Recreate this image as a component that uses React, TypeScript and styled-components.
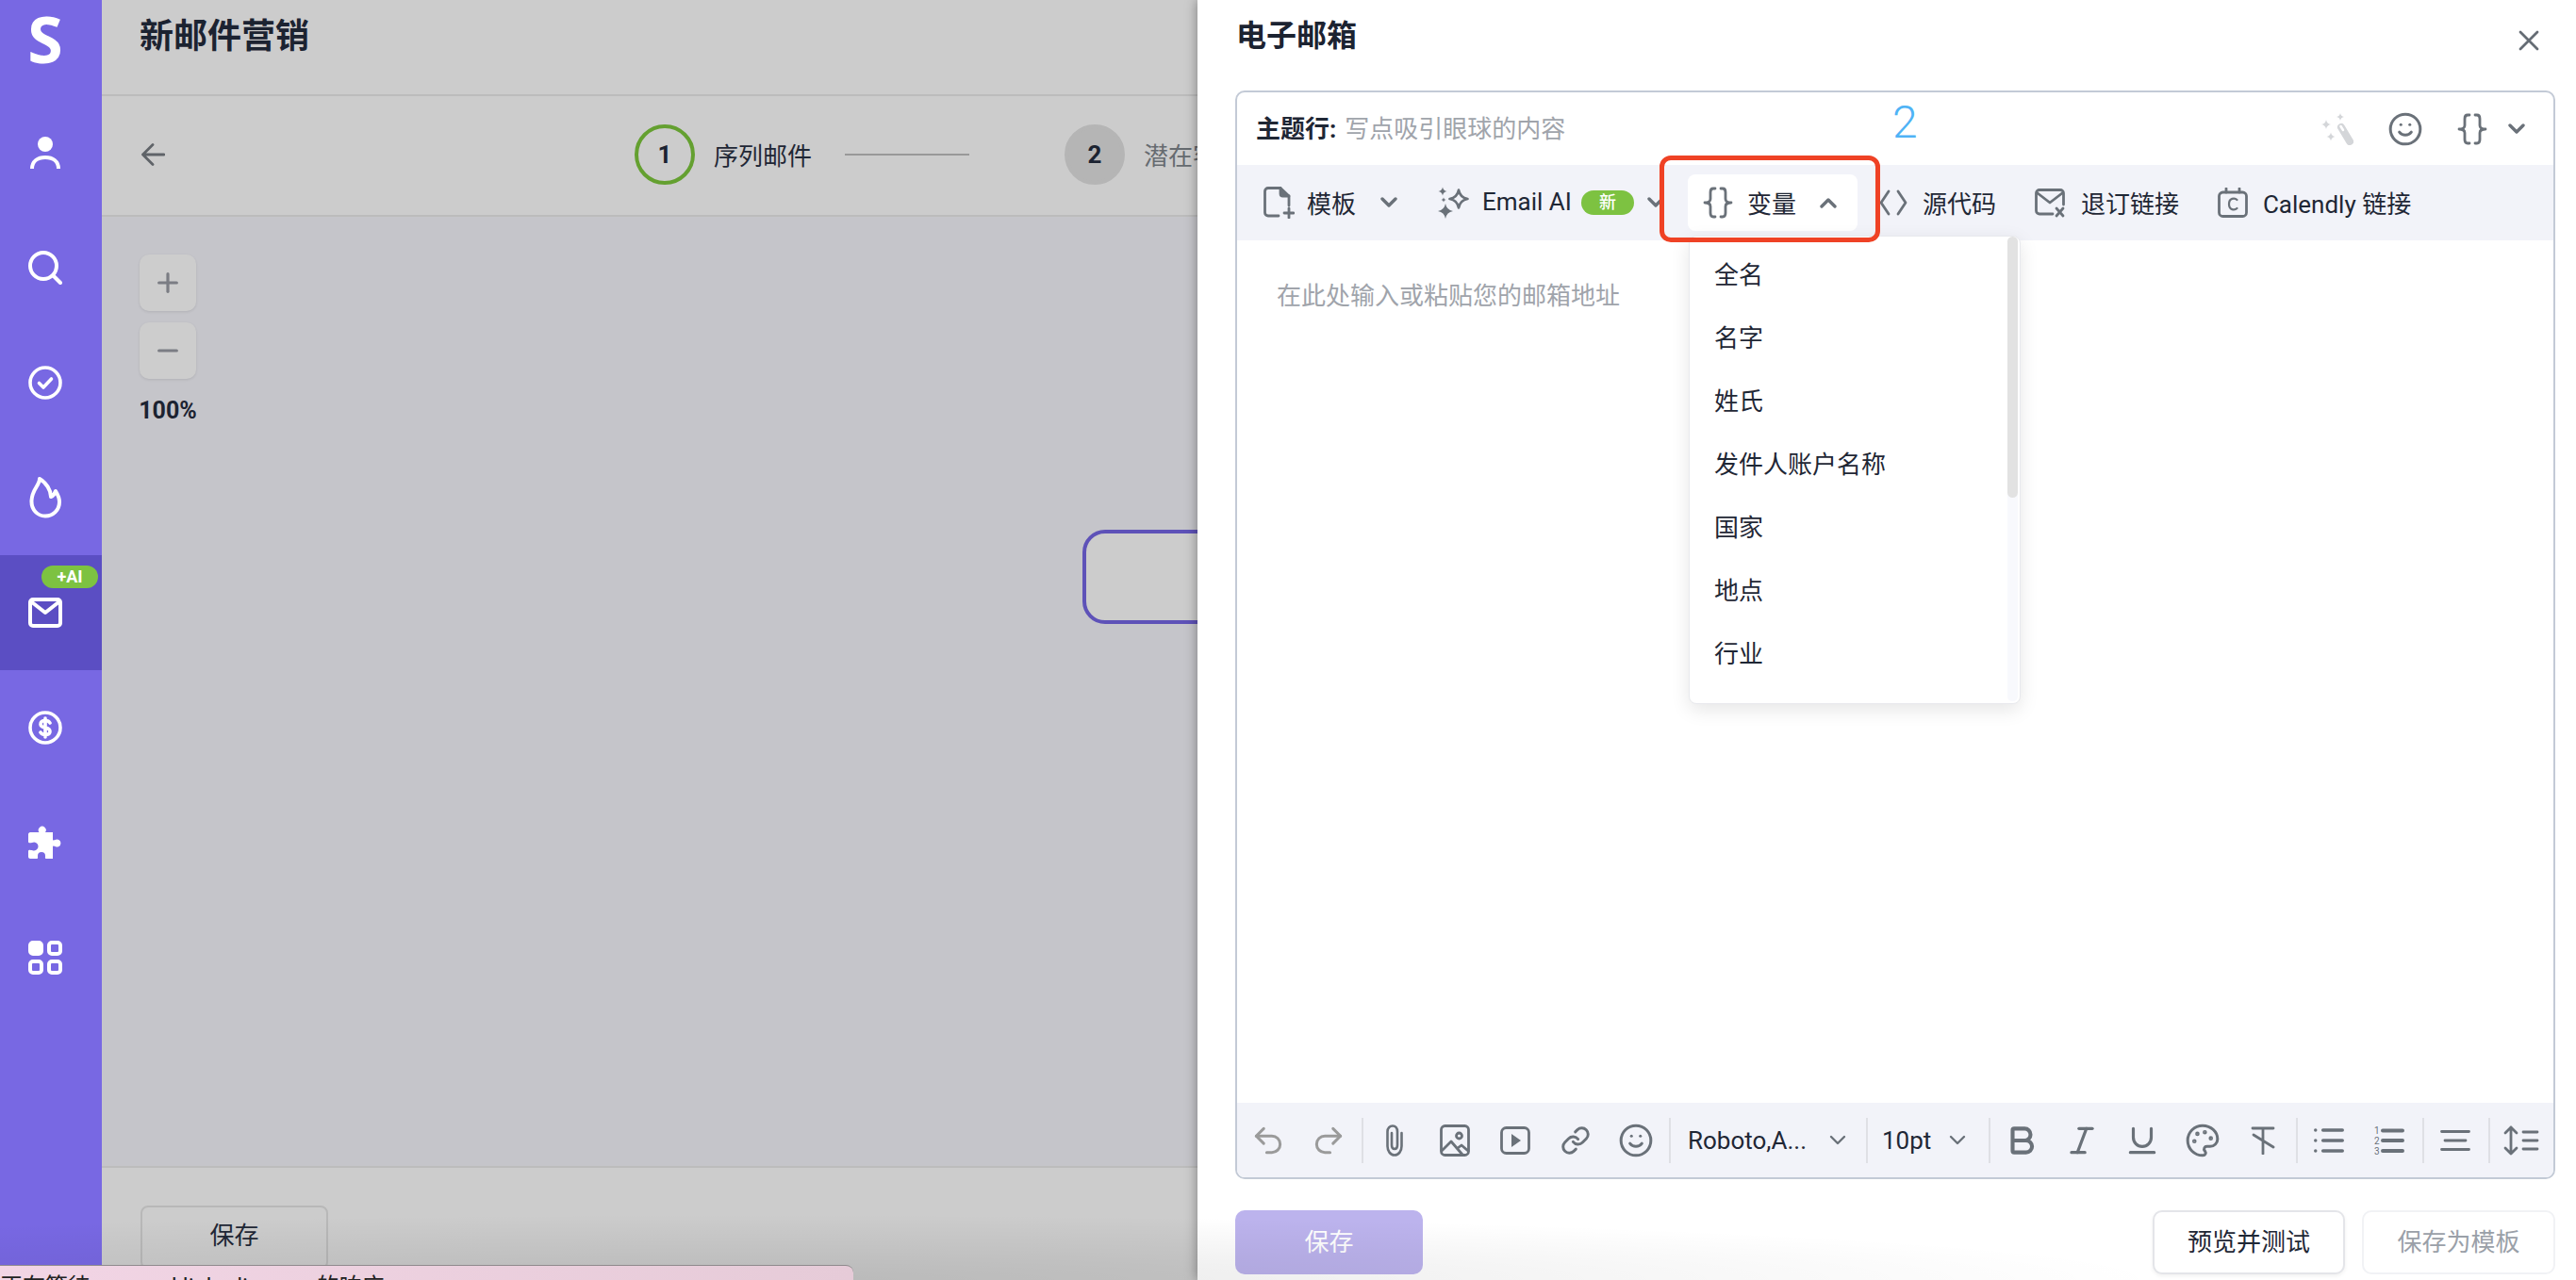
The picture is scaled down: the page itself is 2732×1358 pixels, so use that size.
import React from 'react'
import styled, { createGlobalStyle } from 'styled-components'
import { Bold, Italic, Link, List, Palette, Plus, Minus, Redo2, Smile, Underline, Undo2 } from 'lucide-react'

const GlobalStyle = createGlobalStyle`
  html, body {
    margin: 0;
    padding: 0;
    background: #fff;
  }
  body {
    font-family: Roboto, "Noto Sans CJK SC", sans-serif;
    color: #1f2735;
  }
  * {
    box-sizing: border-box;
  }
`

const Page = styled.div`
  position: relative;
  display: flex;
  width: 2732px;
  height: 1358px;
  overflow: hidden;
`

const Sidebar = styled.nav`
  flex: 0 0 108px;
  display: flex;
  flex-direction: column;
  background: #7868e3;
`

const Logo = styled.div`
  height: 101px;
  display: flex;
  justify-content: center;
  padding: 3px 12px 0 0;
  font-family: "Open Sans", sans-serif;
  font-size: 68px;
  line-height: 76px;
  font-weight: 700;
  color: #fff;
`

const NavItem = styled.div<{ $active?: boolean }>`
  position: relative;
  height: 122px;
  display: flex;
  align-items: center;
  justify-content: center;
  padding-right: 12px;
  background: ${(p) => (p.$active ? '#5b4ec3' : 'transparent')};
`

const AiBadge = styled.span`
  position: absolute;
  top: 11px;
  right: 4px;
  width: 60px;
  height: 24px;
  border-radius: 12px;
  background: #7dc241;
  color: #fff;
  font-size: 18px;
  line-height: 24px;
  font-weight: 700;
  text-align: center;
`

const Main = styled.main`
  flex: 1;
  display: flex;
  flex-direction: column;
  min-width: 0;
`

const Header = styled.header`
  height: 102px;
  flex: none;
  padding: 15px 0 0 40px;
  background: #cccccc;
  border-bottom: 2px solid #bcbcbc;
  font-size: 36px;
  line-height: 48px;
  font-weight: 600;
  color: #1c2331;
`

const Stepper = styled.div`
  height: 128px;
  flex: none;
  display: flex;
  align-items: center;
  padding: 0 0 2px 42px;
  background: #cccccc;
  border-bottom: 2px solid #bcbcbc;
`

const StepCircle = styled.div<{ $current?: boolean }>`
  width: 64px;
  height: 64px;
  border-radius: 50%;
  display: flex;
  align-items: center;
  justify-content: center;
  font-size: 26px;
  font-weight: 700;
  border: 4px solid ${(p) => (p.$current ? '#64a030' : '#b5b5b5')};
  background: ${(p) => (p.$current ? 'transparent' : '#b5b5b5')};
  color: #1c2331;
`

const BackArrow = styled.svg`
  width: 25px;
  height: 24px;
  margin-right: 498px;
  fill: none;
  stroke: #5f6368;
  stroke-width: 2.8;
  stroke-linecap: round;
  stroke-linejoin: round;
`

const StepLabel = styled.span<{ $muted?: boolean }>`
  margin: 0 0 2px 20px;
  font-size: 26px;
  white-space: nowrap;
  color: ${(p) => (p.$muted ? '#666b70' : '#1f2735')};
`

const StepLine = styled.div`
  width: 132px;
  height: 2px;
  margin: 0 101px 0 35px;
  background: #999;
`

const Canvas = styled.div`
  position: relative;
  flex: 1;
  padding: 40px 0 0 39px;
  background: #c5c5ca;
`

const ZoomControls = styled.div`
  width: 62px;
  display: flex;
  flex-direction: column;
  align-items: center;
  gap: 12px;
`

const ZoomButton = styled.div`
  width: 60px;
  height: 60px;
  display: flex;
  align-items: center;
  justify-content: center;
  border-radius: 10px;
  background: #cdcdcd;
  box-shadow: 0 1px 3px rgba(0, 0, 0, 0.1);
  color: #7b7d84;
`

const ZoomValue = styled.div`
  margin-top: 6px;
  font-size: 25px;
  line-height: 32px;
  font-weight: 700;
  color: #1c2331;
`

const FlowNode = styled.div`
  position: absolute;
  left: 1040px;
  top: 332px;
  width: 400px;
  height: 100px;
  border: 4px solid #5e52b8;
  border-radius: 24px;
  background: #cccccc;
`

const Footer = styled.footer`
  height: 121px;
  flex: none;
  padding: 40px 0 0 41px;
  background: #cccccc;
  border-top: 2px solid #bcbcbc;
`

const GhostButton = styled.div`
  width: 199px;
  height: 68px;
  border: 2px solid #b8b8b8;
  border-radius: 8px;
  text-align: center;
  font-size: 26px;
  line-height: 60px;
  color: #1f2735;
`

const StatusBar = styled.div`
  position: absolute;
  left: 0;
  bottom: 0;
  width: 905px;
  height: 16px;
  overflow: hidden;
  border-top: 1px solid #8f8a8d;
  border-top-right-radius: 8px;
  background: linear-gradient(90deg, #f2d5e5, #e6cbd8);
  font-size: 24px;
  line-height: 44px;
  color: #222;
  white-space: nowrap;
  z-index: 5;
`

const BottomShade = styled.div`
  position: absolute;
  left: 0;
  right: 0;
  bottom: 0;
  height: 80px;
  pointer-events: none;
  background: radial-gradient(ellipse 1500px 70px at 800px 100%, rgba(0, 0, 0, 0.09), rgba(0, 0, 0, 0));
  z-index: 4;
`

const Drawer = styled.aside`
  position: absolute;
  top: 0;
  right: 0;
  bottom: 0;
  width: 1462px;
  display: flex;
  flex-direction: column;
  padding: 0 22px 0 40px;
  background: #fff;
  box-shadow: 0 0 12px rgba(0, 0, 0, 0.4);
  z-index: 2;
`

const DrawerHead = styled.div`
  height: 96px;
  flex: none;
  display: flex;
  justify-content: space-between;
  padding: 16px 0 0 1px;
  font-size: 32px;
  line-height: 44px;
  font-weight: 600;
  color: #1c2331;
`

const CloseIcon = styled.svg`
  width: 22px;
  height: 22px;
  margin: 16px 17px 0 0;
  stroke: #656c74;
  stroke-width: 2.8;
  stroke-linecap: round;
`

const EditorBox = styled.section`
  height: 1155px;
  flex: none;
  display: flex;
  flex-direction: column;
  border: 2px solid #c3cad6;
  border-radius: 10px;
`

const SubjectRow = styled.div`
  height: 77px;
  flex: none;
  display: flex;
  align-items: center;
  padding: 0 30px 0 20px;
  font-size: 26px;
`

const SubjectText = styled.div`
  margin-bottom: 5px;
`

const SubjectLabel = styled.span`
  font-weight: 700;
  color: #1f2735;
`

const SubjectHint = styled.span`
  margin-left: 9px;
  color: #a0a4ab;
`

const SubjectTools = styled.div`
  margin-left: auto;
  display: flex;
  align-items: center;
  gap: 36px;
  color: #6a7179;
`

const BraceGroup = styled.div`
  display: flex;
  align-items: center;
  gap: 22px;
`

const Glyph = styled.svg<{ $w: number; $h: number; $color?: string }>`
  flex: none;
  width: ${(p) => p.$w}px;
  height: ${(p) => p.$h}px;
  color: ${(p) => p.$color || '#6a7179'};
`

const Toolbar = styled.div`
  height: 80px;
  flex: none;
  display: flex;
  align-items: center;
  background: #f2f3f9;
  font-size: 26px;
  color: #1f2735;
`

const ToolItem = styled.div<{ $offset: number; $gap: number }>`
  display: flex;
  align-items: center;
  flex: none;
  margin-left: ${(p) => p.$offset}px;
  gap: ${(p) => p.$gap}px;
  white-space: nowrap;
`

const ToolLabel = styled.span<{ $trail?: number }>`
  margin: 0 ${(p) => p.$trail || 0}px 2px 0;
`

const NewBadge = styled.span`
  width: 56px;
  height: 26px;
  margin-left: -4px;
  border-radius: 13px;
  background: #7dc241;
  color: #fff;
  font-size: 18px;
  line-height: 26px;
  font-weight: 500;
  text-align: center;
`

const VariableWrap = styled.div`
  position: relative;
  flex: none;
  margin-left: 25px;
`

const VariableButton = styled.div`
  width: 180px;
  height: 60px;
  display: flex;
  align-items: center;
  padding-left: 16px;
  gap: 15px;
  border-radius: 8px;
  background: #fff;
`

const Dropdown = styled.div`
  position: absolute;
  left: 1px;
  top: 65px;
  width: 352px;
  height: 497px;
  display: flex;
  padding: 8px 2px 2px 0;
  border: 1px solid #e8e9ed;
  border-radius: 8px;
  background: #fff;
  box-shadow: 0 6px 20px rgba(0, 0, 0, 0.1);
  z-index: 3;
`

const DropdownList = styled.ul`
  flex: 1;
  margin: 0;
  padding: 0;
  list-style: none;
`

const DropdownItem = styled.li`
  height: 67px;
  padding-left: 26px;
  font-size: 26px;
  line-height: 67px;
  color: #1f2735;
`

const ScrollTrack = styled.div`
  width: 11px;
  margin-top: -8px;
  border-radius: 6px;
  background: #f8f9fd;
`

const ScrollThumb = styled.div`
  height: 277px;
  border-radius: 6px;
  background: #e2e2e2;
`

const RedFrame = styled.div`
  position: absolute;
  left: 490px;
  top: 165px;
  width: 234px;
  height: 92px;
  border: 5px solid #ef4225;
  border-radius: 12px;
  z-index: 4;
`

const StepNumber = styled.div`
  position: absolute;
  left: 737px;
  top: 102px;
  font-size: 48px;
  line-height: 56px;
  font-weight: 300;
  color: #4fb3f6;
  z-index: 4;
`

const EditorBody = styled.div`
  flex: 1;
  padding: 39px 0 0 42px;
  font-size: 26px;
  line-height: 40px;
  color: #a0a4ab;
`

const FormatBar = styled.div`
  height: 79px;
  flex: none;
  display: flex;
  align-items: center;
  padding-left: 1px;
  background: #f2f3f9;
  border-radius: 0 0 8px 8px;
  font-size: 26px;
  color: #1f2735;
`

const IconSlot = styled.div<{ $muted?: boolean }>`
  width: 64px;
  flex: none;
  display: flex;
  align-items: center;
  justify-content: center;
  color: ${(p) => (p.$muted ? '#9a9a9a' : '#6a7179')};
`

const Divider = styled.div`
  width: 2px;
  height: 48px;
  flex: none;
  margin: 0 1px 0 3px;
  background: #dfe0e5;
`

const FormatSelect = styled.div<{ $width: number; $pad: number; $gap: number }>`
  width: ${(p) => p.$width}px;
  flex: none;
  display: flex;
  align-items: center;
  padding-left: ${(p) => p.$pad}px;
  gap: ${(p) => p.$gap}px;
`

const ActionRow = styled.div`
  flex: none;
  display: flex;
  align-items: center;
  margin-top: 33px;
`

const ActionButton = styled.div<{ $kind: 'primary' | 'outline' | 'disabled'; $width: number }>`
  width: ${(p) => p.$width}px;
  height: 68px;
  flex: none;
  border-radius: 10px;
  font-size: 26px;
  line-height: ${(p) => (p.$kind === 'primary' ? 68 : 64)}px;
  text-align: center;
  background: ${(p) => (p.$kind === 'primary' ? '#bcb3ed' : '#fff')};
  color: ${(p) => (p.$kind === 'primary' ? '#fff' : p.$kind === 'outline' ? '#1f2735' : '#9aa0a8')};
  border: ${(p) => (p.$kind === 'primary' ? 'none' : p.$kind === 'outline' ? '2px solid #e4e5e9' : '2px solid #f1f2f5')};
  box-shadow: ${(p) => (p.$kind === 'outline' ? '0 2px 4px rgba(0, 0, 0, 0.06)' : 'none')};
  margin-left: ${(p) => (p.$kind === 'outline' ? 'auto' : p.$kind === 'disabled' ? '18px' : '0')};
`

const ChevronDown = ({ w = 18, up = false, thick = 3.4 }: { w?: number; up?: boolean; thick?: number }) => (
  <Glyph $w={w} $h={12} viewBox="0 0 18 12" fill="none" stroke="currentColor" strokeWidth={thick} strokeLinecap="round" strokeLinejoin="round">
    <path d={up ? 'M2 10 L9 3 L16 10' : 'M2 2 L9 9 L16 2'} />
  </Glyph>
)

const Braces = () => (
  <Glyph $w={32} $h={34} viewBox="0 0 32 34" fill="none" stroke="currentColor" strokeWidth="2.8" strokeLinecap="round" strokeLinejoin="round">
    <path d="M13 2 H11 C8.5 2 8 4 8 6 V13 C8 15 6.5 17 2 17 C6.5 17 8 19 8 21 V28 C8 30 8.5 32 11 32 H13" />
    <path d="M19 2 H21 C23.5 2 24 4 24 6 V13 C24 15 25.5 17 30 17 C25.5 17 24 19 24 21 V28 C24 30 23.5 32 21 32 H19" />
  </Glyph>
)

const star = (x: number, y: number, r: number) =>
  `M${x} ${y - r} Q${x + r * 0.15} ${y - r * 0.15} ${x + r} ${y} Q${x + r * 0.15} ${y + r * 0.15} ${x} ${y + r} Q${x - r * 0.15} ${y + r * 0.15} ${x - r} ${y} Q${x - r * 0.15} ${y - r * 0.15} ${x} ${y - r}Z`

const SparkleIcon = () => (
  <Glyph $w={33} $h={34} viewBox="0 0 33 34">
    <path d={star(22, 13, 9.5)} fill="none" stroke="currentColor" strokeWidth="2.6" strokeLinejoin="round" />
    <path d={star(5, 5, 4.5)} fill="currentColor" />
    <path d={star(8, 26, 8)} fill="currentColor" />
    <path d={star(6, 14, 2.5)} fill="currentColor" />
  </Glyph>
)

const TemplateIcon = () => (
  <Glyph $w={33} $h={34} viewBox="0 0 33 34" fill="none" stroke="currentColor" strokeWidth="2.8" strokeLinecap="round" strokeLinejoin="round">
    <path d="M16 31 H5 C3 31 1.5 29.5 1.5 27.5 V5 C1.5 3 3 1.5 5 1.5 H18 L27 10 V20" />
    <path d="M18 1.5 V7.5 C18 9 19 10 20.5 10 H27" fill="currentColor" />
    <path d="M27 23 V33 M22 28 H32" />
  </Glyph>
)

const CodeIcon = () => (
  <Glyph $w={30} $h={28} viewBox="0 0 30 28" fill="none" stroke="currentColor" strokeWidth="2.8" strokeLinecap="round" strokeLinejoin="round">
    <path d="M10 2 L2 14 L10 26 M20 2 L28 14 L20 26" />
  </Glyph>
)

const MailXIcon = () => (
  <Glyph $w={32} $h={32} viewBox="0 0 32 32" fill="none" stroke="currentColor" strokeWidth="2.8" strokeLinecap="round" strokeLinejoin="round">
    <path d="M19 28 H5 C3 28 1.5 26.5 1.5 24.5 V6 C1.5 4 3 2.5 5 2.5 H27 C29 2.5 30.5 4 30.5 6 V18" />
    <path d="M3 6 L16 16 L29 6" />
    <path d="M23 22 L30 30 M30 22 L23 30" />
  </Glyph>
)

const CalendlyIcon = () => (
  <Glyph $w={32} $h={32} viewBox="0 0 32 32" fill="none" stroke="currentColor" strokeWidth="2.8" strokeLinecap="round" strokeLinejoin="round">
    <rect x="1.5" y="5" width="29" height="25.5" rx="4" />
    <path d="M9 1 V5 M23 1 V5" />
    <path d="M20.5 13 C18 10.5 12 11 12 17.5 C12 24 18 24.5 20.5 22" strokeWidth="2.2" />
  </Glyph>
)

const WandIcon = () => (
  <Glyph $w={34} $h={34} $color="#d4d6d9" viewBox="0 0 34 34">
    <path d={star(20, 4, 4)} fill="currentColor" />
    <path d={star(5, 12, 5)} fill="currentColor" />
    <path d={star(10, 25, 4.5)} fill="currentColor" />
    <path d="M21 15 L30 30" stroke="currentColor" strokeWidth="8" strokeLinecap="round" />
    <path d="M20.5 14 L23 18" stroke="#fff" strokeWidth="2.5" strokeLinecap="round" />
  </Glyph>
)

const ClipIcon = () => (
  <Glyph $w={20} $h={34} viewBox="0 0 20 34" fill="none" stroke="currentColor" strokeWidth="2.6" strokeLinecap="round" strokeLinejoin="round">
    <path d="M17.5 9 V23 C17.5 28 14.5 32.5 10 32.5 C5.5 32.5 2.5 28 2.5 23 V7.5 C2.5 4 5 1.5 8 1.5 C11 1.5 13 4 13 7.5 V22 C13 24.5 12 26 10 26 C8 26 7 24.5 7 22 V9" />
  </Glyph>
)

const ImageIcon = () => (
  <Glyph $w={32} $h={34} viewBox="0 0 32 34" fill="none" stroke="currentColor" strokeWidth="2.8" strokeLinecap="round" strokeLinejoin="round">
    <rect x="1.5" y="1.5" width="29" height="31" rx="4" />
    <circle cx="20.5" cy="12" r="3" />
    <path d="M2 28 L12 18 L24 32 M19 25 L23 22 L30 28" />
  </Glyph>
)

const VideoIcon = () => (
  <Glyph $w={32} $h={30} viewBox="0 0 32 30">
    <rect x="1.5" y="1.5" width="29" height="27" rx="5" fill="none" stroke="currentColor" strokeWidth="2.8" />
    <path d="M12 8 L22 15 L12 22Z" fill="currentColor" />
  </Glyph>
)

const ClearFormatIcon = () => (
  <Glyph $w={26} $h={30} viewBox="0 0 26 30" fill="none" stroke="currentColor" strokeWidth="2.8" strokeLinecap="round">
    <path d="M2 2 H24 M13 2 V29 M3 9 L24 22" />
  </Glyph>
)

const OrderedIcon = () => (
  <Glyph $w={32} $h={34} viewBox="0 0 32 34">
    <g fill="currentColor" fontSize="10" fontFamily="Roboto, sans-serif">
      <text x="0" y="10">1</text>
      <text x="0" y="21">2</text>
      <text x="0" y="32">3</text>
    </g>
    <path d="M9 6.5 H30 M9 17 H30 M9 28 H30" stroke="currentColor" strokeWidth="4" strokeLinecap="round" />
  </Glyph>
)

const AlignIcon = () => (
  <Glyph $w={32} $h={24} viewBox="0 0 32 24" fill="none" stroke="currentColor" strokeWidth="2.8" strokeLinecap="round">
    <path d="M1.5 2.5 H30.5 M5 12 H27 M1.5 21.5 H30.5" />
  </Glyph>
)

const LineHeightIcon = () => (
  <Glyph $w={38} $h={32} viewBox="0 0 38 32" fill="none" stroke="currentColor" strokeWidth="2.8" strokeLinecap="round" strokeLinejoin="round">
    <path d="M8 2 V30 M2 8 L8 2 L14 8 M2 24 L8 30 L14 24" />
    <path d="M21 7 H36 M21 16 H36 M21 25 H36" />
  </Glyph>
)

const FlameIcon = () => (
  <Glyph $w={34} $h={44} $color="#fff" viewBox="0 0 34 44" fill="none" stroke="currentColor" strokeWidth="4" strokeLinejoin="round">
    <path d="M11 2 C11 9 3 13 2.5 25 C2 35 9 41.5 17 41.5 C25 41.5 32 35.5 32 26.5 C32 22 30.5 19 28 15 C27 18 26 20 23 21 C23 14 18 6 11 2Z" />
  </Glyph>
)

const navIcons = [
  <Glyph key="user" $w={32} $h={34} $color="#fff" viewBox="0 0 32 34">
    <circle cx="16" cy="8" r="8" fill="currentColor" />
    <path d="M2 34 C2 26 8 22 16 22 C24 22 30 26 30 34" fill="none" stroke="currentColor" strokeWidth="4" />
  </Glyph>,
  <Glyph key="search" $w={36} $h={36} $color="#fff" viewBox="0 0 36 36" fill="none" stroke="currentColor" strokeWidth="4" strokeLinecap="round">
    <circle cx="16" cy="16" r="14" />
    <path d="M27 27 L34 34" />
  </Glyph>,
  <Glyph key="check" $w={36} $h={36} $color="#fff" viewBox="0 0 36 36" fill="none" stroke="currentColor" strokeWidth="3.6" strokeLinecap="round" strokeLinejoin="round">
    <circle cx="18" cy="18" r="16" />
    <path d="M11.5 18.5 L16 23 L24.5 14" />
  </Glyph>,
  <FlameIcon key="flame" />,
  <Glyph key="mail" $w={36} $h={32} $color="#fff" viewBox="0 0 36 32" fill="none" stroke="currentColor" strokeWidth="4" strokeLinecap="round" strokeLinejoin="round">
    <rect x="2" y="2" width="32" height="28" rx="3" />
    <path d="M4 5 L18 16 L32 5" />
  </Glyph>,
  <Glyph key="dollar" $w={36} $h={36} $color="#fff" viewBox="0 0 36 36" fill="none" stroke="currentColor" strokeWidth="3.6" strokeLinecap="round" strokeLinejoin="round">
    <circle cx="18" cy="18" r="16" />
    <path d="M23 13 C22 11 20 10.5 18 10.5 C15 10.5 13 12 13 14.5 C13 17 15.5 17.5 18 18 C20.5 18.5 23 19.5 23 22 C23 24.5 21 25.5 18 25.5 C15.5 25.5 14 24.5 13 23 M18 8 V28" />
  </Glyph>,
  <Glyph key="puzzle" $w={36} $h={36} $color="#fff" viewBox="0 0 36 36">
    <path
      fill="currentColor"
      d="M9 7 H11.5 A4 4 0 1 1 18 7 H26 V14.5 C26 16 27.5 15.5 28.5 15 A4 4 0 1 1 28.5 22 C27.5 21.5 26 21 26 22.5 V35 H19 C17.5 35 18 33 18 32 A4 4 0 1 0 10 32 C10 33 10.5 35 9 35 H2 C1 35 0 34 0 33 V27 C0 25 3 26 4 26 A4.5 4.5 0 1 0 4 18 C3 18 0 19 0 17 V9 C0 8 1 7 2 7Z"
    />
  </Glyph>,
  <Glyph key="apps" $w={36} $h={36} $color="#fff" viewBox="0 0 36 36" fill="none" stroke="currentColor" strokeWidth="4">
    <rect x="2" y="2" width="12" height="12" rx="3" fill="currentColor" />
    <rect x="22" y="2" width="12" height="12" rx="3" />
    <rect x="2" y="22" width="12" height="12" rx="3" />
    <rect x="22" y="22" width="12" height="12" rx="3" />
  </Glyph>,
]

const variables = ['全名', '名字', '姓氏', '发件人账户名称', '国家', '地点', '行业']

const App: React.FC = () => {
  return (
    <Page>
      <GlobalStyle />
      <Sidebar>
        <Logo>S</Logo>
        {navIcons.map((icon, i) => (
          <NavItem key={i} $active={i === 4}>
            {i === 4 && <AiBadge>+AI</AiBadge>}
            {icon}
          </NavItem>
        ))}
      </Sidebar>

      <Main>
        <Header>新邮件营销</Header>
        <Stepper>
          <BackArrow viewBox="0 0 25 24">
            <path d="M12 1.5 L1.5 12 L12 22.5 M1.5 12 H24" />
          </BackArrow>
          <StepCircle $current>1</StepCircle>
          <StepLabel>序列邮件</StepLabel>
          <StepLine />
          <StepCircle>2</StepCircle>
          <StepLabel $muted>潜在客户</StepLabel>
        </Stepper>
        <Canvas>
          <ZoomControls>
            <ZoomButton>
              <Plus size={32} strokeWidth={2.4} />
            </ZoomButton>
            <ZoomButton>
              <Minus size={32} strokeWidth={2.4} />
            </ZoomButton>
            <ZoomValue>100%</ZoomValue>
          </ZoomControls>
          <FlowNode />
        </Canvas>
        <Footer>
          <GhostButton>保存</GhostButton>
        </Footer>
      </Main>

      <Drawer>
        <DrawerHead>
          电子邮箱
          <CloseIcon viewBox="0 0 22 22">
            <path d="M2 2 L20 20 M20 2 L2 20" />
          </CloseIcon>
        </DrawerHead>
        <EditorBox>
          <SubjectRow>
            <SubjectText>
              <SubjectLabel>主题行:</SubjectLabel>
              <SubjectHint>写点吸引眼球的内容</SubjectHint>
            </SubjectText>
            <SubjectTools>
              <WandIcon />
              <Smile size={38} strokeWidth={1.9} />
              <BraceGroup>
                <Braces />
                <ChevronDown />
              </BraceGroup>
            </SubjectTools>
          </SubjectRow>
          <Toolbar>
            <ToolItem $offset={28} $gap={13}>
              <TemplateIcon />
              <ToolLabel $trail={13}>模板</ToolLabel>
              <ChevronDown />
            </ToolItem>
            <ToolItem $offset={43} $gap={14}>
              <SparkleIcon />
              <ToolLabel>Email AI</ToolLabel>
              <NewBadge>新</NewBadge>
              <ChevronDown />
            </ToolItem>
            <VariableWrap>
              <VariableButton>
                <Braces />
                <ToolLabel $trail={10}>变量</ToolLabel>
                <ChevronDown up />
              </VariableButton>
              <Dropdown>
                <DropdownList>
                  {variables.map((v) => (
                    <DropdownItem key={v}>{v}</DropdownItem>
                  ))}
                </DropdownList>
                <ScrollTrack>
                  <ScrollThumb />
                </ScrollTrack>
              </Dropdown>
            </VariableWrap>
            <ToolItem $offset={23} $gap={16}>
              <CodeIcon />
              <ToolLabel>源代码</ToolLabel>
            </ToolItem>
            <ToolItem $offset={41} $gap={17}>
              <MailXIcon />
              <ToolLabel>退订链接</ToolLabel>
            </ToolItem>
            <ToolItem $offset={41} $gap={16}>
              <CalendlyIcon />
              <ToolLabel>Calendly 链接</ToolLabel>
            </ToolItem>
          </Toolbar>
          <EditorBody>在此处输入或粘贴您的邮箱地址</EditorBody>
          <FormatBar>
            <IconSlot $muted>
              <Undo2 size={38} strokeWidth={1.9} />
            </IconSlot>
            <IconSlot $muted>
              <Redo2 size={38} strokeWidth={1.9} />
            </IconSlot>
            <Divider />
            <IconSlot>
              <ClipIcon />
            </IconSlot>
            <IconSlot>
              <ImageIcon />
            </IconSlot>
            <IconSlot>
              <VideoIcon />
            </IconSlot>
            <IconSlot>
              <Link size={32} strokeWidth={2.2} />
            </IconSlot>
            <IconSlot>
              <Smile size={38} strokeWidth={1.9} />
            </IconSlot>
            <Divider />
            <FormatSelect $width={203} $pad={17} $gap={21}>
              Roboto,A...
              <ChevronDown w={24} thick={2.4} />
            </FormatSelect>
            <Divider />
            <FormatSelect $width={124} $pad={14} $gap={17}>
              10pt
              <ChevronDown w={22} thick={2.4} />
            </FormatSelect>
            <Divider />
            <IconSlot>
              <Bold size={38} strokeWidth={2.6} />
            </IconSlot>
            <IconSlot>
              <Italic size={38} strokeWidth={2} />
            </IconSlot>
            <IconSlot>
              <Underline size={38} strokeWidth={2} />
            </IconSlot>
            <IconSlot>
              <Palette size={38} strokeWidth={1.9} />
            </IconSlot>
            <IconSlot>
              <ClearFormatIcon />
            </IconSlot>
            <Divider />
            <IconSlot>
              <List size={38} strokeWidth={2.2} />
            </IconSlot>
            <IconSlot>
              <OrderedIcon />
            </IconSlot>
            <Divider />
            <IconSlot>
              <AlignIcon />
            </IconSlot>
            <Divider />
            <IconSlot>
              <LineHeightIcon />
            </IconSlot>
          </FormatBar>
        </EditorBox>
        <ActionRow>
          <ActionButton $kind="primary" $width={199}>
            保存
          </ActionButton>
          <ActionButton $kind="outline" $width={204}>
            预览并测试
          </ActionButton>
          <ActionButton $kind="disabled" $width={205}>
            保存为模板
          </ActionButton>
        </ActionRow>
        <RedFrame />
        <StepNumber>2</StepNumber>
      </Drawer>

      <BottomShade />
      <StatusBar>正在等待 www.ad.linkedin.com 的响应</StatusBar>
    </Page>
  )
}

export default App
